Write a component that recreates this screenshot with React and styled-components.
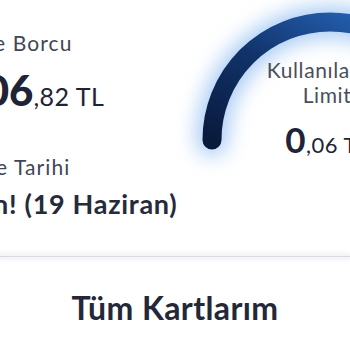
import React from "react";
import styled, { createGlobalStyle } from "styled-components";

const GlobalStyle = createGlobalStyle`
    html, body {
        margin: 0;
        padding: 0;
        background: #ffffff;
    }
    body {
        font-family: "Lato", "Noto Sans", sans-serif;
    }
`;

const Page = styled.div`
    width: 350px;
    height: 350px;
    overflow: hidden;
    background: #ffffff;
`;

const Summary = styled.section`
    display: flex;
    height: 256px;
`;

// The left column starts off-screen: every line is pulled left so that only
// the tail of its text shows, as in the cropped screen.
const Details = styled.div`
    display: flex;
    flex-direction: column;
    flex: none;
    width: 190px;
    padding-top: 30px;
`;

const Label = styled.div`
    margin-left: ${props => props.shift}px;
    margin-top: ${props => props.gap || 0}px;
    font-size: 21px;
    line-height: 25px;
    letter-spacing: 1.1px;
    color: #424654;
    white-space: nowrap;
`;

const Amount = styled.div`
    margin-left: ${props => props.shift}px;
    margin-top: 14px;
    font-size: 25px;
    line-height: 46px;
    letter-spacing: 0.5px;
    color: #1f2336;
    white-space: nowrap;

    strong {
        font-size: 42px;
        line-height: 1;
        font-weight: 900;
        letter-spacing: 0;
    }
`;

const DueDate = styled.div`
    margin-left: ${props => props.shift}px;
    margin-top: 9px;
    font-size: 27px;
    line-height: 32px;
    font-weight: 700;
    letter-spacing: 0.7px;
    color: #262a3b;
    white-space: nowrap;
`;

const Gauge = styled.div`
    position: relative;
    flex: none;
    width: 280px;
    height: 190px;
`;

const GaugeSvg = styled.svg`
    display: block;
    overflow: visible;
`;

const GaugeText = styled.div`
    position: absolute;
    top: 57px;
    left: 137px;
    width: 160px;
    margin-left: -80px;
    text-align: center;
    color: #4a4e5b;
`;

const GaugeLabel = styled.div`
    font-size: 21px;
    line-height: 25px;
    letter-spacing: 0.6px;
`;

const GaugeValue = styled.div`
    margin-top: 15px;
    font-size: 22px;
    line-height: 33px;
    letter-spacing: 0.5px;
    color: #1f2336;
    white-space: nowrap;

    strong {
        font-size: 35px;
        line-height: 1;
        font-weight: 700;
    }
`;

const Divider = styled.hr`
    margin: 0;
    border: 0;
    height: 1px;
    background: #d9dae2;
    box-shadow: 0 0 5px 2px rgba(214, 216, 232, 0.45);
`;

const Title = styled.h2`
    margin: 33px 0 0;
    text-align: center;
    font-size: 32px;
    line-height: 36px;
    font-weight: 700;
    letter-spacing: 0.4px;
    color: #232838;
`;

const ARC = "M 22 140 A 118 118 0 0 1 258 140";

const LimitGauge = () => (
    <Gauge>
        <GaugeSvg width="280" height="190" viewBox="0 0 280 190">
            <defs>
                <linearGradient id="arcGrad" x1="0" y1="1" x2="1" y2="0">
                    <stop offset="0" stopColor="#0a1a3c" />
                    <stop offset="0.45" stopColor="#11336b" />
                    <stop offset="1" stopColor="#2c72cc" />
                </linearGradient>
                <filter id="glow" x="-30%" y="-30%" width="160%" height="160%">
                    <feGaussianBlur stdDeviation="10" />
                </filter>
            </defs>
            <path d={ARC} fill="none" stroke="#8fbcf2" strokeOpacity="0.75"
                strokeWidth="32" strokeLinecap="round" filter="url(#glow)" />
            <path d={ARC} fill="none" stroke="url(#arcGrad)"
                strokeWidth="19" strokeLinecap="round" />
        </GaugeSvg>
        <GaugeText>
            <GaugeLabel>Kullanılabilir</GaugeLabel>
            <GaugeLabel>Limit</GaugeLabel>
            <GaugeValue><strong>0</strong>,06 TL</GaugeValue>
        </GaugeText>
    </Gauge>
);

export default function App() {
    return (
        <Page>
            <GlobalStyle />
            <Summary>
                <Details>
                    <Label shift={-58}>Ekstre Borcu</Label>
                    <Amount shift={-74}><strong>1.006</strong>,82 TL</Amount>
                    <Label shift={-110} gap={35}>Son Ödeme Tarihi</Label>
                    <DueDate shift={-72}>Bugün! (19 Haziran)</DueDate>
                </Details>
                <LimitGauge />
            </Summary>
            <Divider />
            <Title>Tüm Kartlarım</Title>
        </Page>
    );
}
